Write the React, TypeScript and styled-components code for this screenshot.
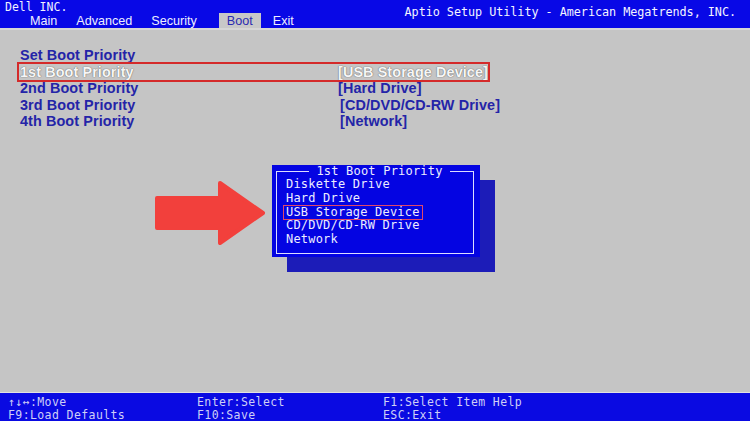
import React from "react";
import styled, { createGlobalStyle } from "styled-components";

const GlobalStyle = createGlobalStyle`
  html, body, #root {
    margin: 0;
    height: 100%;
  }
  body {
    background: #c5c5c5;
    font-family: "Liberation Sans", Arial, sans-serif;
  }
`;

const mono = `"DejaVu Sans Mono", "Liberation Mono", monospace`;

const Screen = styled.div`
  display: flex;
  flex-direction: column;
  height: 100%;
  overflow: hidden;
`;

const TopBar = styled.header`
  height: 28px;
  background: #0808e6;
  display: flex;
  justify-content: space-between;
  flex-shrink: 0;
`;

const TopLeft = styled.div`
  display: flex;
  flex-direction: column;
`;

const Vendor = styled.div`
  font-family: ${mono};
  font-size: 11.5px;
  line-height: 11px;
  color: #f2f2ff;
  padding: 2px 0 0 5px;
  height: 10px;
`;

const Tabs = styled.nav`
  display: flex;
  gap: 3px;
  padding-left: 22px;
  margin-top: 1px;
`;

const Tab = styled.div<{ $active?: boolean }>`
  font-size: 12.6px;
  line-height: 16px;
  height: 16px;
  padding: 0 8px;
  margin: ${(p) => (p.$active ? "0 1px 0 11px" : "0")};
  color: ${(p) => (p.$active ? "#2a2ab0" : "#eeeeff")};
  background: ${(p) => (p.$active ? "#c8c8c8" : "transparent")};
`;

const Product = styled.div`
  font-family: ${mono};
  font-size: 11.8px;
  color: #f4f4ff;
  padding: 5px 14px 0 0;
  letter-spacing: -0.05px;
`;

const Body = styled.main`
  flex: 1;
  position: relative;
  background: #c5c5c5;
  padding-top: 17px;
  border-top: 2px solid #d6d6d6;
`;

const Options = styled.div`
  margin-left: 19px;
  width: 469px;
`;

const Row = styled.div<{ $selected?: boolean }>`
  display: grid;
  grid-template-columns: 318px 1fr;
  height: 16.5px;
  line-height: 16.5px;
  padding-left: 1px;
  font-size: 14.4px;
  font-weight: bold;
  letter-spacing: 0.1px;
  color: ${(p) => (p.$selected ? "#f6f6f6" : "#2424a8")};
  text-shadow: ${(p) => (p.$selected ? "0 0 1px #6c6c6c, 0 0 1px #6c6c6c" : "none")};
  outline: ${(p) => (p.$selected ? "2px solid #d42a2a" : "none")};
`;

const Value = styled.span<{ $shift?: number }>`
  padding-left: ${(p) => p.$shift ?? 0}px;
  white-space: nowrap;
`;

const Arrow = styled.svg`
  position: absolute;
  left: 150px;
  top: 148px;
  width: 122px;
  height: 70px;
`;

const Popup = styled.div`
  position: absolute;
  left: 272px;
  top: 135px;
  width: 208px;
  height: 92px;
  box-sizing: border-box;
  background: #0404e2;
  box-shadow: 15px 15px 0 #1c1cb8;
  padding: 0 6px 3px 4px;
  display: flex;
`;

const Frame = styled.fieldset`
  flex: 1;
  margin: 0;
  border: 1px solid #dcdcff;
  padding: 0 0 0 9px;
  font-family: ${mono};
  font-size: 12px;
  letter-spacing: 0.2px;
  color: #ececff;
`;

const Legend = styled.legend`
  margin: 0 auto;
  padding: 0 7px;
  line-height: 13px;
`;

const Item = styled.div`
  line-height: 13.3px;
  height: 13.3px;
  display: flex;
  margin-top: 0.4px;
`;

const ItemLabel = styled.span<{ $selected?: boolean }>`
  padding: 0 2px;
  margin-left: -2px;
  outline: ${(p) => (p.$selected ? "1px solid #e0486a" : "none")};
`;

const BottomBar = styled.footer`
  height: 29px;
  flex-shrink: 0;
  background: #0a0ae2;
  border-top: 1px solid #e2e2e2;
  display: grid;
  grid-template-columns: 189px 186px 1fr;
  grid-template-rows: 13px 13px;
  align-content: center;
  padding: 3px 0 0 8px;
  box-sizing: border-box;
  font-family: ${mono};
  font-size: 11.5px;
  letter-spacing: 0.4px;
  color: #cfcff6;
`;

const Hint = styled.span`
  line-height: 13px;
  white-space: nowrap;
`;

const tabs = ["Main", "Advanced", "Security", "Boot", "Exit"];

const rows = [
  { label: "Set Boot Priority", value: "" },
  { label: "1st Boot Priority", value: "[USB Storage Device]", selected: true },
  { label: "2nd Boot Priority", value: "[Hard Drive]" },
  { label: "3rd Boot Priority", value: "[CD/DVD/CD-RW Drive]", shift: 2 },
  { label: "4th Boot Priority", value: "[Network]", shift: 2 },
];

const devices = [
  "Diskette Drive",
  "Hard Drive",
  "USB Storage Device",
  "CD/DVD/CD-RW Drive",
  "Network",
];

const hints = [
  "↑↓↔:Move",
  "Enter:Select",
  "F1:Select Item Help",
  "F9:Load Defaults",
  "F10:Save",
  "ESC:Exit",
];

export default function App() {
  return (
    <>
      <GlobalStyle />
      <Screen>
        <TopBar>
          <TopLeft>
            <Vendor>Dell INC.</Vendor>
            <Tabs>
              {tabs.map((t) => (
                <Tab key={t} $active={t === "Boot"}>
                  {t}
                </Tab>
              ))}
            </Tabs>
          </TopLeft>
          <Product>Aptio Setup Utility - American Megatrends, INC.</Product>
        </TopBar>

        <Body>
          <Options>
            {rows.map((r) => (
              <Row key={r.label} $selected={r.selected}>
                <span>{r.label}</span>
                <Value $shift={r.shift}>{r.value}</Value>
              </Row>
            ))}
          </Options>

          <Arrow viewBox="0 0 122 70">
            <path
              d="M7 20 L70 20 L70 5 L113 35 L70 65 L70 50 L7 50 Z"
              fill="#f2403c"
              stroke="#f2403c"
              strokeWidth="4"
              strokeLinejoin="round"
            />
          </Arrow>

          <Popup>
            <Frame>
              <Legend>1st Boot Priority</Legend>
              {devices.map((d) => (
                <Item key={d}>
                  <ItemLabel $selected={d === "USB Storage Device"}>{d}</ItemLabel>
                </Item>
              ))}
            </Frame>
          </Popup>
        </Body>

        <BottomBar>
          {hints.map((h) => (
            <Hint key={h}>{h}</Hint>
          ))}
        </BottomBar>
      </Screen>
    </>
  );
}
